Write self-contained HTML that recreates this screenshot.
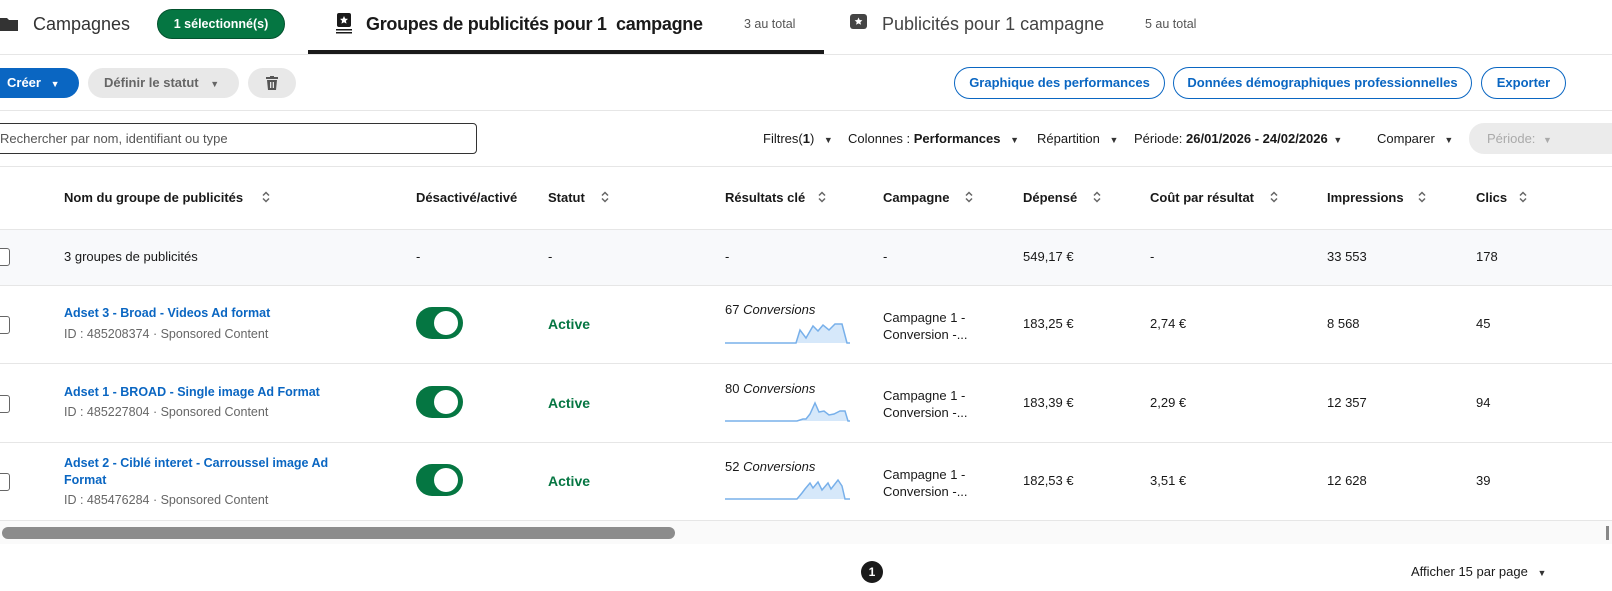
<!DOCTYPE html>
<html><head><meta charset="utf-8"><style>
*{box-sizing:border-box;margin:0;padding:0}
body{width:1612px;height:591px;overflow:hidden;background:#fff;font-family:"Liberation Sans",sans-serif;color:#000;position:relative}
.a{position:absolute;white-space:nowrap}
.hl{position:absolute;left:0;width:1612px;height:1px;background:#e6e6e6}
.th{font-size:13px;font-weight:bold;color:#191919}
.td{font-size:13px;color:#191919}
.srt{position:absolute;width:10px;height:14px}
.lnk{font-size:12.5px;font-weight:bold;color:#0a66c2}
.sub{font-size:12.5px;color:#666}
.tg{position:absolute;left:416px;width:47px;height:32px;border-radius:16px;background:#057642}
.tg:after{content:"";position:absolute;right:5px;top:4px;width:24px;height:24px;border-radius:50%;background:#fff}
.act{font-size:14px;font-weight:bold;color:#057642}
.cb{position:absolute;left:-6px;width:16px;height:18px;border:1.5px solid #666;border-radius:3px;background:#fff}
.btn{position:absolute;height:32px;border:1px solid #0a66c2;border-radius:16px;color:#0a66c2;font-size:13px;font-weight:bold;text-align:center;line-height:30px}
.dd{font-size:9px;color:#333}
</style></head><body>
<svg class="a" style="left:0;top:16px" width="20" height="16"><path d="M0 2h7l2 2h9v11H0z" fill="#333"/></svg>
<div class="a" style="left:33px;top:14px;font-size:18px;color:#333">Campagnes</div>
<div class="a" style="left:157px;top:9px;width:128px;height:30px;border-radius:15px;background:#057642;border:1px solid #03522e;color:#fff;font-size:12.5px;font-weight:bold;text-align:center;line-height:28px">1 sélectionné(s)</div>
<svg class="a" style="left:335px;top:13px" width="18" height="22"><rect x="2" y="0" width="14" height="14" rx="2" fill="#1a1a1a"/><path d="M9 3l1.2 2.6 2.8.3-2.1 1.9.6 2.8L9 9.2 6.5 10.6l.6-2.8L5 5.9l2.8-.3z" fill="#fff"/><rect x="1" y="16" width="16" height="1.5" fill="#1a1a1a"/><rect x="1" y="19" width="16" height="1.5" fill="#1a1a1a"/></svg>
<div class="a" style="left:366px;top:14px;font-size:18px;font-weight:bold;color:#1a1a1a;letter-spacing:-0.3px">Groupes de publicités pour 1&nbsp; campagne</div>
<div class="a" style="left:744px;top:17px;font-size:12.5px;color:#555">3 au total</div>
<div class="a" style="left:308px;top:50px;width:516px;height:4px;background:#1a1a1a"></div>
<svg class="a" style="left:850px;top:14px" width="18" height="16"><rect x="0" y="0" width="17" height="15" rx="3" fill="#444"/><path d="M8.5 3.5l1.2 2.5 2.7.3-2 1.8.6 2.7-2.5-1.4-2.4 1.4.6-2.7-2-1.8 2.7-.3z" fill="#fff"/></svg>
<div class="a" style="left:882px;top:14px;font-size:18px;color:#444">Publicités pour 1 campagne</div>
<div class="a" style="left:1145px;top:17px;font-size:12.5px;color:#555">5 au total</div>
<div class="hl" style="top:54px"></div>
<div class="a" style="left:-20px;top:68px;width:99px;height:30px;border-radius:15px;background:#0a66c2;color:#fff;font-size:13px;font-weight:bold;line-height:30px;padding-left:27px">Créer <span style="font-size:9px;margin-left:6px">▼</span></div>
<div class="a" style="left:88px;top:68px;width:151px;height:30px;border-radius:15px;background:#e8e8e8;color:#666;font-size:13px;font-weight:bold;line-height:30px;padding-left:16px">Définir le statut <span style="font-size:9px;margin-left:8px">▼</span></div>
<div class="a" style="left:248px;top:68px;width:48px;height:30px;border-radius:15px;background:#e8e8e8"></div>
<svg class="a" style="left:266px;top:76px" width="12" height="14"><rect x="0" y="1" width="12" height="2" fill="#555"/><rect x="4" y="0" width="4" height="2" fill="#555"/><path d="M1 4h10l-1 10H2z" fill="#555"/><rect x="4" y="6" width="1.3" height="6" fill="#e8e8e8"/><rect x="6.7" y="6" width="1.3" height="6" fill="#e8e8e8"/></svg>
<div class="btn" style="left:954px;top:67px;width:211px">Graphique des performances</div>
<div class="btn" style="left:1173px;top:67px;width:299px">Données démographiques professionnelles</div>
<div class="btn" style="left:1481px;top:67px;width:85px">Exporter</div>
<div class="hl" style="top:110px"></div>
<div class="a" style="left:-10px;top:123px;width:487px;height:31px;border:1px solid #333;border-radius:4px;font-size:13px;color:#555;line-height:29px;padding-left:9px">Rechercher par nom, identifiant ou type</div>
<div class="a td" style="left:763px;top:131px">Filtres(<b>1</b>) <span class="dd" style="margin-left:6px">▼</span></div>
<div class="a td" style="left:848px;top:131px">Colonnes : <b>Performances</b> <span class="dd" style="margin-left:6px">▼</span></div>
<div class="a td" style="left:1037px;top:131px">Répartition <span class="dd" style="margin-left:6px">▼</span></div>
<div class="a td" style="left:1134px;top:131px">Période: <b>26/01/2026 - 24/02/2026</b> <span class="dd" style="margin-left:2px">▼</span></div>
<div class="a td" style="left:1377px;top:131px">Comparer <span class="dd" style="margin-left:6px">▼</span></div>
<div class="a" style="left:1469px;top:123px;width:160px;height:31px;border-radius:15px;background:#ebebeb;color:#aaa;font-size:13px;line-height:31px;padding-left:18px">Période: <span style="font-size:9px;margin-left:4px">▼</span></div>
<div class="hl" style="top:166px"></div>
<div class="a th" style="left:64px;top:190px">Nom du groupe de publicités</div>
<div class="a th" style="left:416px;top:190px">Désactivé/activé</div>
<div class="a th" style="left:548px;top:190px">Statut</div>
<div class="a th" style="left:725px;top:190px">Résultats clé</div>
<div class="a th" style="left:883px;top:190px">Campagne</div>
<div class="a th" style="left:1023px;top:190px">Dépensé</div>
<div class="a th" style="left:1150px;top:190px">Coût par résultat</div>
<div class="a th" style="left:1327px;top:190px">Impressions</div>
<div class="a th" style="left:1476px;top:190px">Clics</div>
<svg width="0" height="0" style="position:absolute"><defs><g id="s"><path d="M2 5.5L5 2.5 8 5.5M2 8.5L5 11.5 8 8.5" fill="none" stroke="#666" stroke-width="1.5"/></g></defs></svg>
<svg class="srt" style="left:261px;top:190px"><use href="#s"/></svg>
<svg class="srt" style="left:600px;top:190px"><use href="#s"/></svg>
<svg class="srt" style="left:817px;top:190px"><use href="#s"/></svg>
<svg class="srt" style="left:964px;top:190px"><use href="#s"/></svg>
<svg class="srt" style="left:1092px;top:190px"><use href="#s"/></svg>
<svg class="srt" style="left:1269px;top:190px"><use href="#s"/></svg>
<svg class="srt" style="left:1417px;top:190px"><use href="#s"/></svg>
<svg class="srt" style="left:1518px;top:190px"><use href="#s"/></svg>
<div class="hl" style="top:229px"></div>
<div class="a" style="left:0;top:230px;width:1612px;height:55px;background:#f8f9fb"></div>
<div class="cb" style="top:248px"></div>
<div class="a td" style="left:64px;top:249px">3 groupes de publicités</div>
<div class="a td" style="left:416px;top:249px">-</div>
<div class="a td" style="left:548px;top:249px">-</div>
<div class="a td" style="left:725px;top:249px">-</div>
<div class="a td" style="left:883px;top:249px">-</div>
<div class="a td" style="left:1023px;top:249px">549,17 €</div>
<div class="a td" style="left:1150px;top:249px">-</div>
<div class="a td" style="left:1327px;top:249px">33 553</div>
<div class="a td" style="left:1476px;top:249px">178</div>
<div class="hl" style="top:285px"></div>
<div class="cb" style="top:316px"></div>
<div class="a lnk" style="left:64px;top:306px">Adset 3 - Broad - Videos Ad format</div>
<div class="a sub" style="left:64px;top:327px">ID : 485208374 · Sponsored Content</div>
<div class="tg" style="top:307px"></div>
<div class="a act" style="left:548px;top:316px">Active</div>
<div class="a td" style="left:725px;top:302px">67 <i>Conversions</i></div>
<svg class="a" style="left:0;top:0" width="1612" height="591">
<polygon points="725,343 796,343 800,330 806,338 813,326 818,331 823,325 829,330 835,324 842,324 847,343" fill="#d6e8fa"/>
<polyline points="725,343 796,343 800,330 806,338 813,326 818,331 823,325 829,330 835,324 842,324 847,343 850,343" fill="none" stroke="#78b0ea" stroke-width="1.5"/>
<polygon points="725,421 797,421 803,419 806,419 810,414 815,403 819,412 824,411 829,415 834,414 840,411 845,411 848,421" fill="#d6e8fa"/>
<polyline points="725,421 797,421 803,419 806,419 810,414 815,403 819,412 824,411 829,415 834,414 840,411 845,411 848,421 850,421" fill="none" stroke="#78b0ea" stroke-width="1.5"/>
<polygon points="725,499 797,499 802,493 805,489 810,483 813,488 818,482 822,490 828,483 831,489 838,480 842,486 845,499" fill="#d6e8fa"/>
<polyline points="725,499 797,499 802,493 805,489 810,483 813,488 818,482 822,490 828,483 831,489 838,480 842,486 845,499 850,499" fill="none" stroke="#78b0ea" stroke-width="1.5"/>
</svg>
<div class="a td" style="left:883px;top:309px;line-height:17px">Campagne 1 -<br>Conversion -...</div>
<div class="a td" style="left:1023px;top:316px">183,25 €</div>
<div class="a td" style="left:1150px;top:316px">2,74 €</div>
<div class="a td" style="left:1327px;top:316px">8 568</div>
<div class="a td" style="left:1476px;top:316px">45</div>
<div class="hl" style="top:363px"></div>
<div class="cb" style="top:395px"></div>
<div class="a lnk" style="left:64px;top:385px">Adset 1 - BROAD - Single image Ad Format</div>
<div class="a sub" style="left:64px;top:405px">ID : 485227804 · Sponsored Content</div>
<div class="tg" style="top:386px"></div>
<div class="a act" style="left:548px;top:395px">Active</div>
<div class="a td" style="left:725px;top:381px">80 <i>Conversions</i></div>
<div class="a td" style="left:883px;top:387px;line-height:17px">Campagne 1 -<br>Conversion -...</div>
<div class="a td" style="left:1023px;top:395px">183,39 €</div>
<div class="a td" style="left:1150px;top:395px">2,29 €</div>
<div class="a td" style="left:1327px;top:395px">12 357</div>
<div class="a td" style="left:1476px;top:395px">94</div>
<div class="hl" style="top:442px"></div>
<div class="cb" style="top:473px"></div>
<div class="a lnk" style="left:64px;top:455px;line-height:17px">Adset 2 - Ciblé interet - Carroussel image Ad<br>Format</div>
<div class="a sub" style="left:64px;top:493px">ID : 485476284 · Sponsored Content</div>
<div class="tg" style="top:464px"></div>
<div class="a act" style="left:548px;top:473px">Active</div>
<div class="a td" style="left:725px;top:459px">52 <i>Conversions</i></div>
<div class="a td" style="left:883px;top:466px;line-height:17px">Campagne 1 -<br>Conversion -...</div>
<div class="a td" style="left:1023px;top:473px">182,53 €</div>
<div class="a td" style="left:1150px;top:473px">3,51 €</div>
<div class="a td" style="left:1327px;top:473px">12 628</div>
<div class="a td" style="left:1476px;top:473px">39</div>
<div class="hl" style="top:520px"></div>
<div class="a" style="left:0;top:521px;width:1612px;height:23px;background:#fafafa"></div>
<div class="a" style="left:2px;top:527px;width:673px;height:12px;border-radius:6px;background:#8c8c8c"></div>
<div class="a" style="left:1606px;top:526px;width:3px;height:14px;background:#888"></div>
<div class="a" style="left:861px;top:561px;width:22px;height:22px;border-radius:50%;background:#1a1a1a;color:#fff;font-size:12px;font-weight:bold;text-align:center;line-height:22px">1</div>
<div class="a td" style="left:1411px;top:564px">Afficher 15 par page <span class="dd" style="margin-left:6px">▼</span></div>
</body></html>
